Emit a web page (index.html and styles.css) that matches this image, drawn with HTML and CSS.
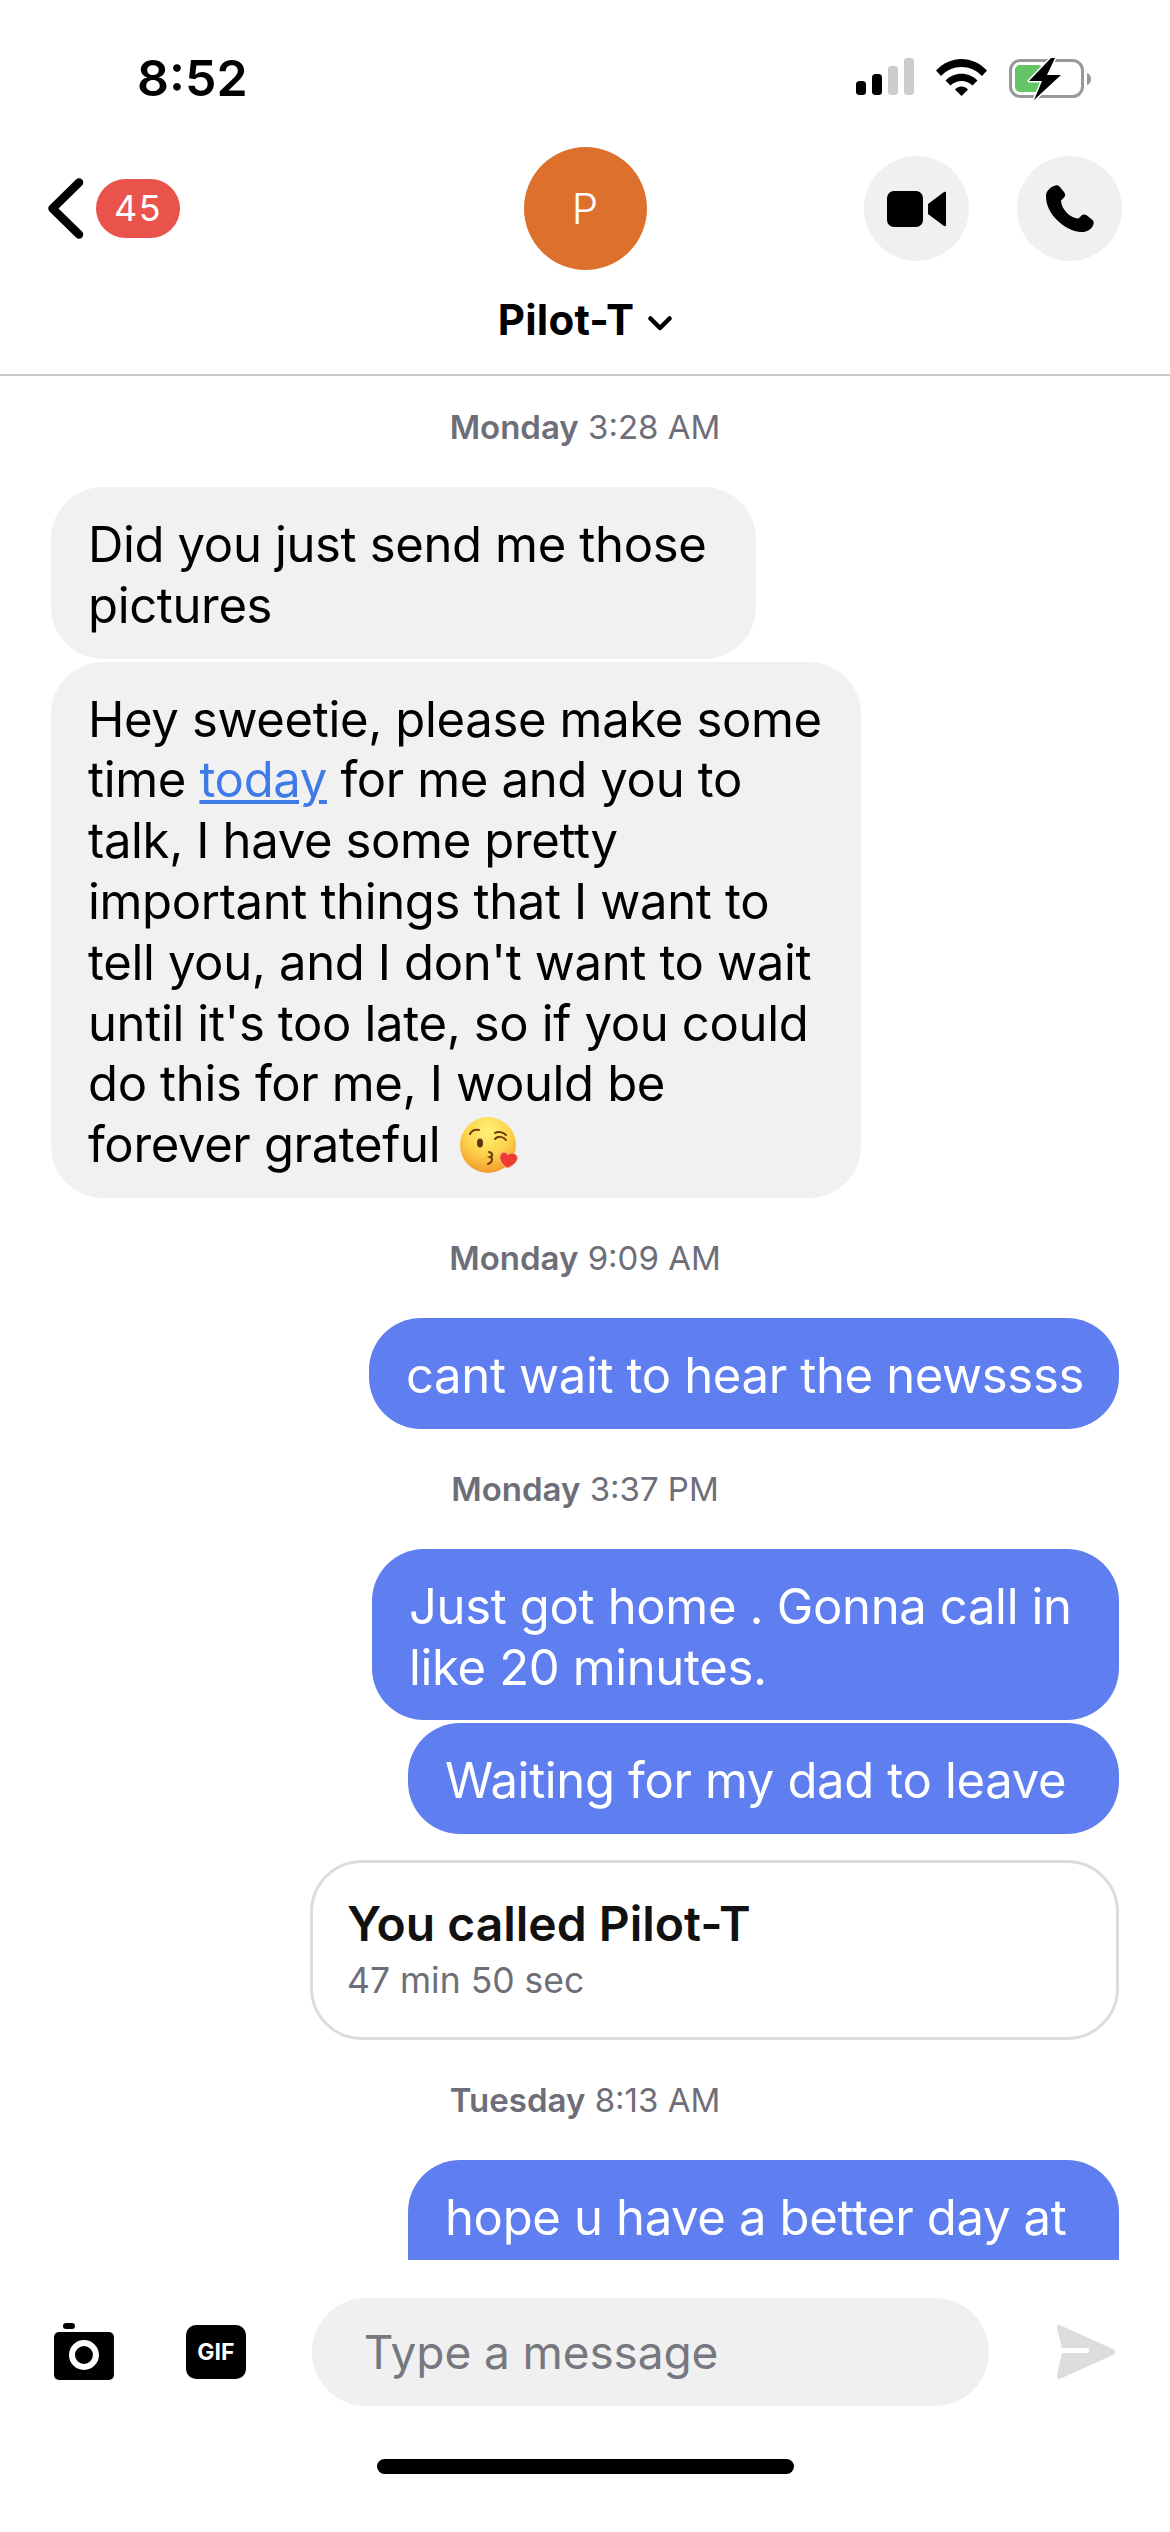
FILE: index.html
```html
<!DOCTYPE html>
<html lang="en">

<head>
    <meta charset="utf-8" />
    <title>Pilot-T</title>
    <link rel="stylesheet" href="styles.css">
</head>

<body>
    <div class="phone">
        <div class="status-bar">
            <span class="clock">8:52</span>
            <div class="status-icons">
                <svg class="signal" width="58" height="37" viewBox="0 0 58 37">
                    <rect x="0" y="23" width="10" height="14" rx="3.5" fill="#000" />
                    <rect x="16" y="16" width="10" height="21" rx="3.5" fill="#000" />
                    <rect x="32" y="8" width="10" height="29" rx="3.5" fill="#ccc" />
                    <rect x="48" y="0" width="10" height="37" rx="3.5" fill="#ccc" />
                </svg>
                <svg class="wifi" width="51" height="38" viewBox="0 0 51 38">
                    <path d="M0 12.5C14-3 37-3 51 12.500L46 18C34.500 6 16.500 6 5 18Z" fill="#000" />
                    <path d="M9.500 22.500C18 13.500 33 13.500 41.500 22.500L36.500 27.500C30.500 21.500 20.500 21.500 14.500 27.500Z" fill="#000" />
                    <path d="M19 31.500C22.500 27.500 28.500 27.500 32 31.500L25.500 38Z" fill="#000" />
                </svg>
                <svg class="battery" width="84" height="42" viewBox="0 0 84 42">
                    <rect x="1.500" y="2.500" width="72" height="36" rx="10" fill="none" stroke="#999" stroke-width="3" />
                    <rect x="6" y="7" width="28" height="27" rx="5" fill="#65c466" />
                    <path d="M78 15C81 16 82 18 82 21C82 24 81 26 78 27Z" fill="#999" />
                    <path d="M42 0L20 23H33L25 42L52 17H38L46 0Z" fill="#000" stroke="#fff" stroke-width="3" stroke-linejoin="round" paint-order="stroke" />
                </svg>
            </div>
        </div>

        <header class="chat-header">
            <div class="header-left">
                <svg class="back" width="36" height="61" viewBox="0 0 36 61">
                    <path d="M31 4.500L4.500 30.500L31 56.500" fill="none" stroke="#000" stroke-width="8.500" stroke-linecap="round" stroke-linejoin="round" />
                </svg>
                <span class="badge">45</span>
            </div>
            <div class="header-center">
                <div class="avatar">P</div>
                <div class="contact-name">
                    Pilot-T
                    <svg width="24" height="15" viewBox="0 0 24 15">
                        <path d="M2.500 2.500L12 12L21.500 2.500" fill="none" stroke="#000" stroke-width="4.500" stroke-linecap="round" stroke-linejoin="round" />
                    </svg>
                </div>
            </div>
            <div class="header-right">
                <div class="round-btn">
                    <svg width="60" height="36" viewBox="0 0 60 36">
                        <rect x="0" y="0" width="36" height="36" rx="7" fill="#000" />
                        <path d="M41 13L57 1C58 0.500 59 1 59 2V34C59 35 58 35.500 57 35L41 23Z" fill="#000" />
                    </svg>
                </div>
                <div class="round-btn">
                    <svg width="48" height="48" viewBox="0 0 48 48">
                        <path d="M8 1C10 0 12 0 13.500 1.500L18 7C19.500 9 19.500 11 18 12.500L15 15.500C15 20 17.500 24 20.500 27.500C24 31 28 33.500 32.500 33.500L35.500 30.500C37 29 39 29 41 30.500L46.500 35C48 36.500 48 38.500 47 40.500C45 44.500 41 47 36 47C26 47 17 41 11 35C5 29 0 21 0 11C0 7 3 3 8 1Z" fill="#000" />
                    </svg>
                </div>
            </div>
        </header>

        <main class="thread">
            <div class="stamp"><b>Monday</b> 3:28 AM</div>
            <div class="bubble in w-705">Did you just send me those<br>pictures</div>
            <div class="bubble in next w-810">Hey sweetie, please make some<br>time <a href="#">today</a> for me and you to<br>talk, I have some pretty<br>important things that I want to<br>tell you, and I don't want to wait<br>until it's too late, so if you could<br>do this for me, I would be<br>forever grateful
                <svg class="emoji" width="60" height="58" viewBox="0 0 60 58">
                    <defs>
                        <radialGradient id="face" cx="50%" cy="25%" r="78%">
                            <stop offset="0" stop-color="#fff27a" />
                            <stop offset="0.55" stop-color="#fdd14a" />
                            <stop offset="1" stop-color="#f0962c" />
                        </radialGradient>
                    </defs>
                    <circle cx="28" cy="28" r="28" fill="url(#face)" />
                    <path d="M10 17C12 13 15 12 19 13" fill="none" stroke="#6b3d10" stroke-width="2" stroke-linecap="round" />
                    <ellipse cx="20" cy="26" rx="3" ry="4.500" fill="#5a3410" />
                    <path d="M35 22C38 19 43 19 46 23M35 16C38 14 43 15 46 18" fill="none" stroke="#6b3d10" stroke-width="2" stroke-linecap="round" />
                    <path d="M29 35C33 36 33 39 30 40C33 41 33 45 28 47" fill="none" stroke="#6b3d10" stroke-width="2" stroke-linecap="round" />
                    <path d="M47 51C41 47 38 41 41 37C43 34 47 35 48 38C50 35 55 36 57 39C59 44 53 49 47 51Z" fill="#ee3a35" stroke="#f9b27a" stroke-width="1" />
                </svg>
            </div>

            <div class="stamp"><b>Monday</b> 9:09 AM</div>
            <div class="bubble out w-750">cant wait to hear the newssss</div>

            <div class="stamp"><b>Monday</b> 3:37 PM</div>
            <div class="bubble out w-747">Just got home . Gonna call in<br>like 20 minutes.</div>
            <div class="bubble out next w-711">Waiting for my dad to leave</div>
            <div class="call-card">
                <div class="call-title">You called Pilot-T</div>
                <div class="call-time">47 min 50 sec</div>
            </div>

            <div class="stamp"><b>Tuesday</b> 8:13 AM</div>
            <div class="bubble out w-711">hope u have a better day at<br>work</div>
        </main>

        <footer class="composer">
            <svg class="camera" width="60" height="57" viewBox="0 0 60 57">
                <rect x="9" y="0" width="12" height="6" rx="3" fill="#000" />
                <rect x="0" y="9" width="60" height="48" rx="5" fill="#000" />
                <circle cx="30" cy="32" r="12" fill="none" stroke="#fff" stroke-width="6" />
            </svg>
            <div class="gif-btn">GIF</div>
            <div class="message-input">Type a message</div>
            <svg class="send" width="58" height="54" viewBox="0 0 58 54">
                <path d="M0 4C-1 0 2-1 5 1L56 24C59 25.500 59 28.500 56 30L5 53C2 55-1 54 0 50L5 28H30C33 28 33 23 30 23H5Z" fill="#dcdddf" />
            </svg>
        </footer>

        <div class="home-bar"></div>
    </div>
</body>

</html>
```

FILE: styles.css
```css
* {
    box-sizing: border-box;
}

body {
    margin: 0;
    background-color: #fff;
    font-family: Inter, "Liberation Sans", sans-serif;
    color: #000;
}

.phone {
    width: 1170px;
    height: 2532px;
    display: flex;
    flex-direction: column;
    overflow: hidden;
}

/* status bar */
.status-bar {
    height: 130px;
    flex: none;
    display: flex;
    justify-content: space-between;
    padding: 52px 77px 0 137px;
}

.clock {
    font-size: 50px;
    font-weight: 600;
    line-height: 52px;
}

.status-icons {
    display: flex;
    align-items: flex-start;
    gap: 22px;
    padding-top: 6px;
}

/* header */
.chat-header {
    height: 246px;
    flex: none;
    display: grid;
    grid-template-columns: 1fr auto 1fr;
    padding: 17px 48px 0;
    border-bottom: 2px solid #c8c8c8;
}

.header-left,
.header-right {
    height: 123px;
    display: flex;
    align-items: center;
}

.header-left {
    gap: 12px;
}

.header-right {
    justify-content: flex-end;
    gap: 48px;
}

.badge {
    width: 84px;
    height: 59px;
    border-radius: 30px;
    background-color: #e9534b;
    color: #fff;
    font-size: 36px;
    letter-spacing: 1.5px;
    line-height: 59px;
    text-align: center;
}

.avatar {
    width: 123px;
    height: 123px;
    margin: 0 auto;
    border-radius: 50%;
    background-color: #de702d;
    color: #fff;
    font-size: 42px;
    font-weight: 300;
    line-height: 123px;
    text-align: center;
}

.contact-name {
    margin-top: 25px;
    display: flex;
    align-items: center;
    gap: 14px;
    font-size: 42px;
    font-weight: 700;
    letter-spacing: 0.2px;
    line-height: 50px;
}

.contact-name svg {
    margin-top: 6px;
}

.round-btn {
    width: 105px;
    height: 105px;
    border-radius: 50%;
    background-color: #f0f0f0;
    display: flex;
    justify-content: center;
    align-items: center;
}

/* messages */
.thread {
    height: 1884px;
    flex: none;
    overflow: hidden;
    display: flex;
    flex-direction: column;
    padding: 31px 51px 0;
}

.stamp {
    margin: 40px 0;
    text-align: center;
    font-size: 33px;
    line-height: 40px;
    color: #6e6e78;
}

.stamp:first-child {
    margin-top: 0;
}

.stamp b {
    font-weight: 600;
}

.bubble {
    flex: none;
    padding: 28px 0 22px 37px;
    border-radius: 52px;
    font-size: 49px;
    letter-spacing: -0.35px;
    line-height: 60.800px;
    white-space: nowrap;
}

/* bubble widths follow the text in the original app */
.w-705 {
    width: 705px;
}

.w-711 {
    width: 711px;
}

.w-747 {
    width: 747px;
}

.w-750 {
    width: 750px;
}

.w-810 {
    width: 810px;
}

.bubble.in {
    background-color: #f1f1f1;
}

.bubble.in a {
    color: #3f7be6;
}

.bubble.out {
    align-self: flex-end;
    background-color: #5f7ef0;
    color: #fff;
}

.bubble.next {
    margin-top: 3px;
}

.emoji {
    margin: -14px 0 -14px 6px;
    vertical-align: 1px;
}

.call-card {
    flex: none;
    align-self: flex-end;
    width: 809px;
    height: 180px;
    margin-top: 26px;
    padding: 33px 34px;
    border: 3px solid #dcdcdc;
    border-radius: 52px;
}

.call-title {
    font-size: 48px;
    font-weight: 600;
    line-height: 56px;
    color: #111;
}

.call-time {
    margin-top: 8px;
    font-size: 35.500px;
    line-height: 42px;
    color: #6e6e78;
}

/* composer */
.composer {
    height: 166px;
    flex: none;
    display: flex;
    align-items: center;
    padding: 18px 55px 0 54px;
}

.camera {
    margin-top: -1px;
}

.gif-btn {
    width: 60px;
    height: 54px;
    margin-left: 72px;
    border-radius: 10px;
    background-color: #000;
    color: #fff;
    font-size: 23px;
    font-weight: 700;
    line-height: 54px;
    text-align: center;
}

.message-input {
    width: 678px;
    height: 108px;
    margin-left: 66px;
    padding-left: 52px;
    border-radius: 54px;
    background-color: #f0f0f0;
    color: #77777f;
    font-size: 46px;
    letter-spacing: -0.1px;
    line-height: 108px;
}

.send {
    margin-left: 68px;
}

.home-bar {
    width: 417px;
    height: 15px;
    margin: 33px auto 0;
    border-radius: 8px;
    background-color: #000;
}
```
